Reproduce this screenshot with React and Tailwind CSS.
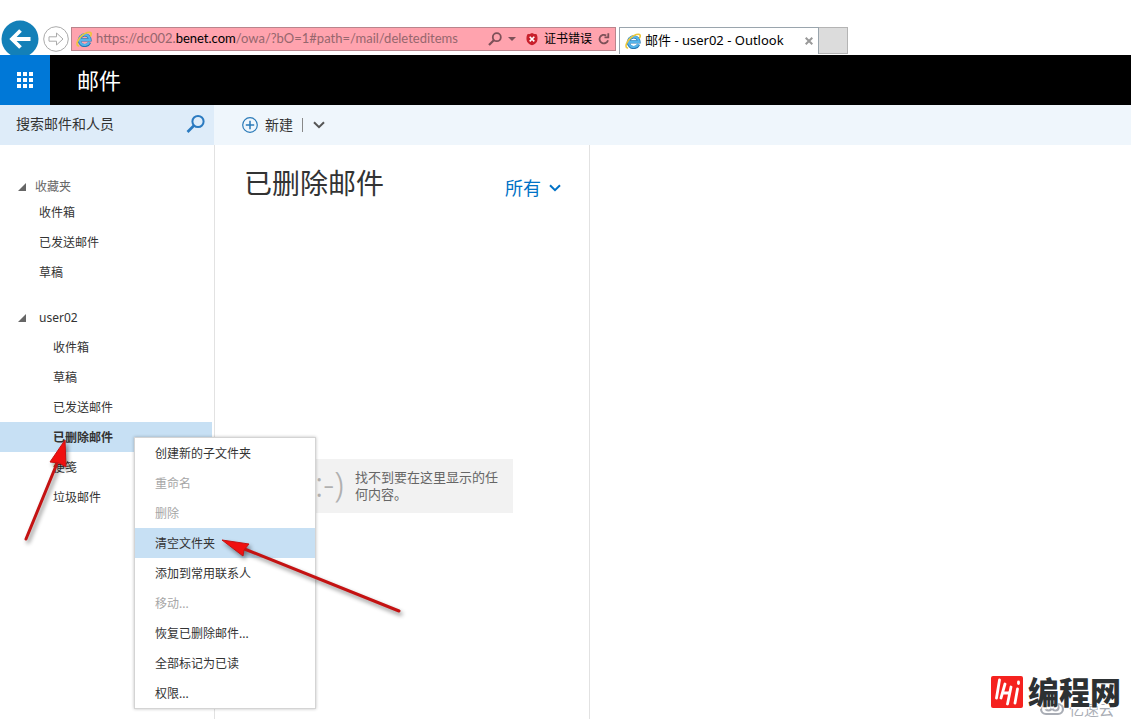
import React from "react";

const favorites = ["收件箱", "已发送邮件", "草稿"];

const folders = ["收件箱", "草稿", "已发送邮件", "已删除邮件", "便笺", "垃圾邮件"];

const menuItems = [
  { label: "创建新的子文件夹" },
  { label: "重命名", disabled: true },
  { label: "删除", disabled: true },
  { label: "清空文件夹", active: true },
  { label: "添加到常用联系人" },
  { label: "移动...", disabled: true },
  { label: "恢复已删除邮件..." },
  { label: "全部标记为已读" },
  { label: "权限..." },
];

const IeLogo = () => (
  <svg viewBox="0 0 16 16" className="h-4 w-4 shrink-0" fill="none" aria-hidden="true">
    <path d="M13.600 11.300A5.300 5.300 0 1 1 14 8.900H4.500" stroke="#2277b4" strokeWidth="3.200" />
    <path d="M13.300 11.200A5.200 5.200 0 1 1 13.900 8.900H4.500" stroke="#55b4ea" strokeWidth="2.200" />
    <path
      d="M2.400 15C-.4 14 1.400 8.600 5.400 5.100 9.200 1.700 14 .2 15 2c.4.8.1 2-.4 3"
      stroke="#ecc63a"
      strokeWidth="1.600"
      strokeLinecap="round"
    />
  </svg>
);

const Chevron = ({ className }) => (
  <svg viewBox="0 0 12 8" className={className} fill="none" stroke="currentColor" strokeWidth="2" aria-hidden="true">
    <path d="M1 1.200 6 6.200l5-5" />
  </svg>
);

const BrowserBar = () => (
  <div className="flex h-[55px] shrink-0 items-end overflow-hidden bg-white">
    <div className="flex h-[35px] items-start gap-1 pl-px">
      <button type="button" aria-label="后退">
        <svg viewBox="0 0 38 38" className="h-[38px] w-[38px]">
          <circle cx="19" cy="19" r="18.500" fill="#1380b8" />
          <path d="M29.500 19H11M19.500 10.500 11 19l8.500 8.500" fill="none" stroke="#fff" strokeWidth="3.800" />
        </svg>
      </button>
      <button type="button" aria-label="前进" className="pt-1.5">
        <svg viewBox="0 0 26 26" className="h-[26px] w-[26px]" fill="#fff" stroke="#aaa">
          <circle cx="13" cy="13" r="12.300" />
          <path d="M6 10.800h7.500V7l6.500 6-6.500 6v-3.800H6z" />
        </svg>
      </button>
    </div>

    <div className="mb-1 ml-0.5 flex h-6 w-[545px] items-center border border-[#b9848c] bg-[#ffa3ae] pl-1 text-[#7d5058]">
      <IeLogo />
      <div
        role="textbox"
        aria-label="地址"
        className="ml-1 grow font-[Lato,sans-serif] text-[13px] whitespace-nowrap text-[#96666d]"
      >
        https://dc002.<span className="text-black">benet.com</span>/owa/?bO=1#path=/mail/deleteditems
      </div>
      <button type="button" aria-label="搜索" className="flex items-center gap-1.5">
        <svg viewBox="0 0 14 14" className="h-3.5 w-3.5" fill="none" stroke="currentColor">
          <circle cx="8.800" cy="5.200" r="4" strokeWidth="1.800" />
          <path d="M5.800 8.200 1 13" strokeWidth="2.200" />
        </svg>
        <svg viewBox="0 0 8 4" className="h-1 w-2" fill="currentColor">
          <path d="M0 0h8L4 4z" />
        </svg>
      </button>
      <button type="button" className="ml-2.5 flex items-center gap-1.5 text-xs text-black">
        <svg viewBox="0 0 12 14" className="h-3.5 w-3">
          <path
            d="M6 1c1.500.9 3 1.100 4.600 1.200 1.200 2 1.200 5.400.3 7.600C9.800 11.700 8 12.700 6 13.200 4 12.700 2.200 11.700 1.100 9.800.2 7.600.2 4.200 1.400 2.200 3 2.100 4.500 1.900 6 1z"
            fill="#c8202c"
          />
          <path d="m3.700 4.800 4.600 4.600m0-4.600L3.700 9.400" stroke="#fff" strokeWidth="1.600" />
        </svg>
        证书错误
      </button>
      <button type="button" aria-label="刷新" className="mr-[5px] ml-1.5">
        <svg viewBox="0 0 12 12" className="h-3 w-3" fill="none" stroke="currentColor" strokeWidth="1.800">
          <path d="M10 7.200A4.300 4.300 0 1 1 8.200 2.500" />
          <path d="M6.500 4.300h3.800V.3" />
        </svg>
      </button>
    </div>

    <div className="mb-px ml-[3px] flex h-[27px] items-stretch">
      <div className="flex w-[200px] items-center border border-b-0 border-[#9aa5ad] px-[5px] text-black">
        <IeLogo />
        <span className="ml-1 grow whitespace-nowrap text-[13px]">邮件 - user02 - Outlook</span>
        <button type="button" aria-label="关闭标签页">
          <svg viewBox="0 0 8 8" className="h-2 w-2" stroke="#999" strokeWidth="2">
            <path d="m.7.7 6.600 6.600m0-6.600L.7 7.300" />
          </svg>
        </button>
      </div>
      <button type="button" aria-label="新建标签页" className="w-[29px] border border-l-0 border-[#b4b4b4] bg-[#dcdcdc]" />
    </div>
  </div>
);

const SuiteHeader = () => (
  <header className="flex h-[50px] shrink-0 items-center bg-black">
    <button type="button" aria-label="应用启动器" className="flex h-full w-[50px] items-center justify-center bg-[#0078d7]">
      <svg viewBox="0 0 16 16" className="h-4 w-4" fill="#fff">
        {[0, 6, 12].map((y) => [0, 6, 12].map((x) => <rect key={`${x}-${y}`} x={x} y={y} width="4" height="4" />))}
      </svg>
    </button>
    <h1 className="pl-[27px] text-[22px] leading-8 text-white">邮件</h1>
  </header>
);

const CommandBar = () => (
  <div className="flex h-10 shrink-0 bg-[#eff6fc]">
    <form className="flex w-[214px] shrink-0 items-center bg-[#deecf9] pr-2 pb-0.5 pl-4">
      <input
        type="text"
        aria-label="搜索邮件和人员"
        placeholder="搜索邮件和人员"
        className="w-0 grow text-sm text-[#333] outline-none placeholder:text-[#333]"
      />
      <button type="button" aria-label="搜索">
        <svg viewBox="0 0 20 20" className="h-5 w-5" fill="none" stroke="#2a7ac0">
          <circle cx="12" cy="7.500" r="5.600" strokeWidth="2" />
          <path d="M8 11.500 1.500 18" strokeWidth="2.600" />
        </svg>
      </button>
    </form>
    <div className="flex items-center pl-7">
      <button type="button" className="flex items-center gap-[7px] text-sm text-[#333]">
        <svg viewBox="0 0 16 16" className="h-4 w-4" fill="none" stroke="#2a7ab8">
          <circle cx="8" cy="8" r="7.300" strokeWidth="1.200" />
          <path d="M8 3.800v8.400M3.800 8h8.400" strokeWidth="1.500" />
        </svg>
        新建
      </button>
      <span className="ml-[9px] h-3.5 w-px bg-[#888]" />
      <button type="button" aria-label="更多新建选项" className="ml-2.5">
        <Chevron className="h-2 w-3 text-[#555]" />
      </button>
    </div>
  </div>
);

const GroupToggle = () => (
  <svg viewBox="0 0 8 8" className="h-2 w-2 shrink-0" fill="#666" aria-hidden="true">
    <path d="M8 0v8H0z" />
  </svg>
);

const ContextMenu = () => (
  <ul
    role="menu"
    className="absolute top-[15px] left-[134px] z-20 w-[182px] border border-[#d4d4d4] bg-white font-normal shadow-[0_0_3px_rgba(0,0,0,0.25)]"
  >
    {menuItems.map((item) => (
      <li key={item.label} role="none">
        <button
          type="button"
          role="menuitem"
          disabled={item.disabled}
          className={`flex h-[30px] w-full items-center pt-0.5 pl-5 text-left ${
            item.disabled ? "text-[#a6a6a6]" : "text-[#333]"
          } ${item.active ? "bg-[#c7e0f4]" : ""}`}
        >
          {item.label}
        </button>
      </li>
    ))}
  </ul>
);

const FolderPane = () => (
  <nav className="flex w-[215px] shrink-0 flex-col border-r border-[#e2e2e2] pt-[31px] text-xs text-[#333]">
    <button type="button" className="flex h-[22px] items-center gap-[9px] pl-[18px] text-[#666]">
      <GroupToggle />
      收藏夹
    </button>
    <ul className="mb-3.5">
      {favorites.map((name) => (
        <li key={name}>
          <button type="button" className="flex h-[30px] w-full items-center pl-[39px]">
            {name}
          </button>
        </li>
      ))}
    </ul>
    <button type="button" className="flex h-[30px] items-center gap-[13px] pt-0.5 pl-[18px]">
      <GroupToggle />
      user02
    </button>
    <ul>
      {folders.map((name) => {
        const selected = name === "已删除邮件";
        return (
          <li key={name} className={selected ? "relative mr-0.5 bg-[#c7e0f4] font-bold" : ""}>
            <button type="button" className="flex h-[30px] w-full items-center pt-0.5 pl-[53px]">
              {name}
            </button>
            {selected && <ContextMenu />}
          </li>
        );
      })}
    </ul>
  </nav>
);

const MessageList = () => (
  <section className="flex w-[375px] shrink-0 flex-col border-r border-[#e2e2e2]">
    <div className="flex items-center justify-between pt-[15px] pr-7 pl-[29px]">
      <h2 className="text-[28px] leading-[46px] text-[#333]">已删除邮件</h2>
      <button type="button" className="flex items-center gap-2 pt-2.5 text-lg text-[#0072c6]">
        所有
        <Chevron className="h-2 w-3" />
      </button>
    </div>
    <div className="mx-auto mt-[253px] flex h-[54px] w-[222px] items-center bg-[#f2f2f2] pl-6">
      <span className="w-10 shrink-0 pb-1 text-[34px] leading-[40px] font-light text-[#b0b0b0]">:-)</span>
      <p className="w-[146px] text-[13px] leading-[17px] text-[#666]">找不到要在这里显示的任何内容。</p>
    </div>
  </section>
);

// red pointers over the folder and the menu entry
const Pointers = () => (
  <svg
    viewBox="0 0 420 640"
    className="pointer-events-none absolute top-0 left-0 z-30 h-[640px] w-[420px] drop-shadow-[2px_3px_2px_rgba(0,0,0,0.45)]"
    aria-hidden="true"
  >
    <path d="M26 539 58 461M399 611 242 548" stroke="#c41212" strokeWidth="3" strokeLinecap="round" />
    <path d="m65 440 1 27-7-4-9-1z" fill="#f01010" stroke="#c41212" />
    <path d="m222 540 27 4-5 6-1 6z" fill="#f01010" stroke="#c41212" />
  </svg>
);

const Watermark = () => (
  <div className="absolute right-[9px] bottom-0 z-10 h-11 w-[132px]">
    <div className="absolute right-2 bottom-0 flex items-center gap-1 text-[15px] leading-5 text-[#a9adb5]">
      <svg viewBox="0 0 26 16" className="h-4 w-[26px]" fill="none" stroke="currentColor" strokeWidth="2.200">
        <path d="M7 3h12a5 5 0 0 1 0 10H7A5 5 0 0 1 7 3z" />
        <circle cx="9.500" cy="6.500" r="3" />
        <circle cx="16.500" cy="6.500" r="3" />
      </svg>
      亿速云
    </div>
    <div className="relative flex items-center gap-1 text-[31px] leading-[34px] font-black text-[#2d3133]">
      <svg viewBox="0 0 34 34" className="h-[34px] w-[34px]">
        <rect x="1" y="1" width="32" height="32" rx="2" fill="#f5221f" />
        <path
          d="m9.500 5-3 18M15 9l-4 14M12.500 18h6M21 12l-3.500 17M27.500 14 25 28M28.500 7v1.500"
          stroke="#fff"
          strokeWidth="2.800"
          strokeLinecap="round"
          fill="none"
        />
      </svg>
      <span className="whitespace-nowrap [text-shadow:0_1px_0_#fff,0_2px_0_#fff]">编程网</span>
    </div>
  </div>
);

export default function App() {
  return (
    <div className="relative flex min-h-screen flex-col overflow-hidden bg-white font-['Noto_Sans','Noto_Sans_CJK_SC',sans-serif]">
      <BrowserBar />
      <SuiteHeader />
      <CommandBar />
      <main className="flex grow">
        <FolderPane />
        <MessageList />
        <section aria-label="阅读窗格" className="grow" />
      </main>
      <Pointers />
      <Watermark />
    </div>
  );
}
